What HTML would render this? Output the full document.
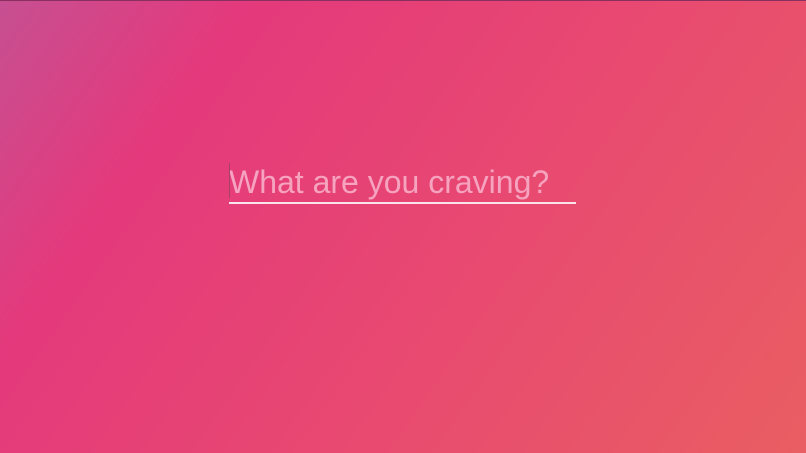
<!DOCTYPE html>
<html><head><style>
html,body{margin:0;padding:0;width:806px;height:453px;overflow:hidden}
body{background:linear-gradient(125deg,#c65092 0%,#e4397c 22%,#e84a70 60%,#e95e62 100%);position:relative;font-family:"Liberation Sans",sans-serif}
.top{position:absolute;left:0;top:0;width:806px;height:1px;background:#8a3060}
.caret{position:absolute;left:229px;top:163px;width:1px;height:35px;background:#a8406a}
.txt{position:absolute;left:229px;top:162px;font-size:32px;color:#f6a3bf;line-height:40px;white-space:nowrap}
.line{position:absolute;left:229px;top:202px;width:347px;height:2px;background:#fbe3ec}
</style></head><body>
<div class="top"></div>
<div class="txt">What are you craving?</div>
<div class="caret"></div>
<div class="line"></div>
</body></html>
